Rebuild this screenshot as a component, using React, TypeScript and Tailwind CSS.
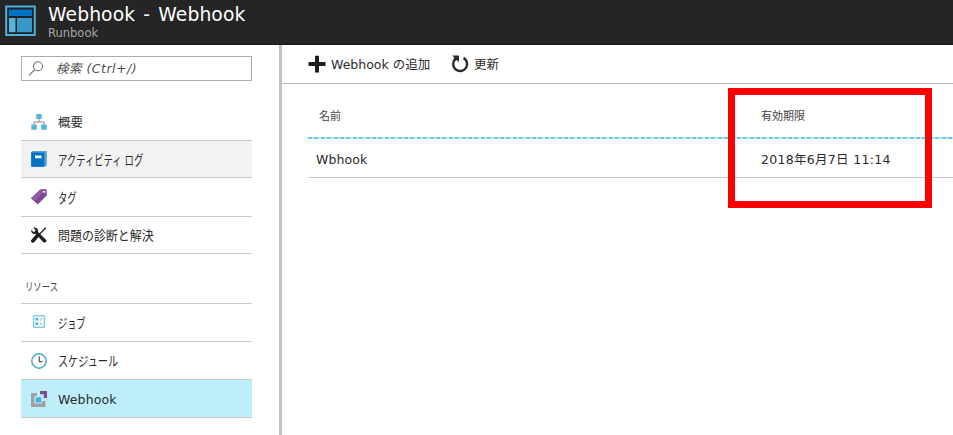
import type { ReactNode } from "react";

function RunbookLogo() {
  return (
    <svg width="32" height="34" viewBox="0 0 32 34" className="shrink-0">
      <rect x="1.200" y="3.500" width="28.600" height="28.500" fill="#1c2429" stroke="#4fb1d8" strokeWidth="2" />
      <rect x="4" y="6.500" width="23" height="6.500" fill="#0072c6" />
      <rect x="4" y="15" width="6.500" height="14.200" fill="#59b4d9" />
      <rect x="12" y="15" width="15" height="14.200" fill="#3999c6" />
    </svg>
  );
}

function SearchIcon() {
  return (
    <svg width="16" height="16" viewBox="0 0 16 16" fill="none" stroke="#707070" strokeWidth="1.100">
      <circle cx="10" cy="5.200" r="4.500" />
      <path d="M6.800 8.500 1 14.300" />
    </svg>
  );
}

function OverviewIcon() {
  return (
    <svg width="16" height="16" viewBox="0 0 16 16">
      <path d="M8 4v4M3 11V8h10v3" fill="none" stroke="#8a8a8a" />
      <path d="M5.200 0h5.500v5H5.200zM.3 10.500h5.500v5.300H.3zM10.200 10.500h5.500v5.300h-5.500z" fill="#59b4d9" />
    </svg>
  );
}

function LogIcon() {
  return (
    <svg width="16" height="16" viewBox="0 0 16 16">
      <path d="M1.800 0H15.800v14l-1.300 1.500H0V1.500z" fill="#5b9fd3" />
      <path d="M.3 1.500H13.300v14.300H.3z" fill="#0072c6" />
      <rect x="4" y="4.500" width="6.500" height="2.700" fill="#fff" />
    </svg>
  );
}

function TagIcon() {
  return (
    <svg width="16" height="16" viewBox="0 0 16 16">
      <path d="M0 9.200 9.300.5 14.500 0l1.200 1v5.500L6.800 15.600z" fill="#804998" />
      <path d="M0 9.200 9.300.5 14.500 0 3.700 12.600z" fill="#925cab" />
      <circle cx="13.200" cy="2.800" r="1.100" fill="#fff" />
    </svg>
  );
}

function ToolsIcon() {
  return (
    <svg width="16" height="16" viewBox="0 0 16 16">
      <path d="M14.900.7 8.700 7" stroke="#1e1e1e" strokeWidth="1.300" />
      <path d="M7.400 7.500 1.800 14" stroke="#1e1e1e" strokeWidth="3.500" strokeLinecap="round" />
      <path
        d="M2.200.6 4.600 3 4 4.500 2.500 5 .2 2.800C-.2 5.200 1.800 7.500 4.700 6.800l7.400 8.200c1 1.100 3.900.5 3.400-1.300-.1-.5-.5-.8-.8-1.100L7 5C7.700 2 5.300-.3 2.200.6Z"
        fill="#1e1e1e"
      />
    </svg>
  );
}

function JobsIcon() {
  return (
    <svg width="16" height="16" viewBox="0 0 16 16">
      <rect x="2.500" y=".7" width="11" height="11.600" rx="1" fill="#edf8fc" stroke="#7bc8e5" strokeWidth="1.300" />
      <path d="M4.500 3h2.500v2.500H4.500zM4.500 7.500H7V10H4.500z" fill="#4daed5" />
      <path d="m8.800 4.300 1 1 2-2.500M9 7.500l2 2.400M9 9.800l1-1" fill="none" stroke="#9eafb8" strokeWidth=".8" />
    </svg>
  );
}

function ClockIcon() {
  return (
    <svg width="16" height="16" viewBox="0 0 16 16" fill="none">
      <circle cx="8" cy="8" r="7.200" fill="#fff" stroke="#4ba5cd" strokeWidth="1.500" />
      <path d="M8.300 3.500v5.200h3.200" stroke="#555" strokeWidth="1.200" />
    </svg>
  );
}

function WebhookIcon() {
  return (
    <svg width="16" height="16" viewBox="0 0 16 16">
      <path d="M0 2h6v3H3.500v7.500h7.500V10h3.500v6H0z" fill="#a0a1a2" />
      <rect x="4.700" y="6.300" width="5.500" height="5.200" fill="#48b0da" />
      <path d="M9 0h7v7h-3.300V3.300H9z" fill="#804998" />
    </svg>
  );
}

function PlusIcon() {
  return (
    <svg width="18" height="18" viewBox="0 0 18 18" className="shrink-0">
      <path d="M7 .7h4v6.400h6.500v4H11v6.400H7v-6.400H.5v-4H7z" fill="#1e1e1e" />
    </svg>
  );
}

function RefreshIcon() {
  return (
    <svg width="18" height="18" viewBox="0 0 18 18" className="block shrink-0">
      <path d="M4 4.300A7 7 0 1 0 12.500 2.900" fill="none" stroke="#2b2b2b" strokeWidth="2.400" />
      <path d="M1.300.6h6.700v6.700L5.800 5 3.800 6 2.300 4.500 3.300 2.800z" fill="#2b2b2b" />
    </svg>
  );
}

type NavItem = { icon: ReactNode; label: string; row: string; text: string };

const general: NavItem[] = [
  { icon: <OverviewIcon />, label: "概要", row: "h-[38px]", text: "pt-[3px] text-[12.5px]" },
  { icon: <LogIcon />, label: "アクティビティ ログ", row: "h-[37px] bg-[#f2f2f2]", text: "pt-[2px] text-[13.5px] origin-left scale-x-[0.69]" },
  { icon: <TagIcon />, label: "タグ", row: "h-[39px]", text: "pt-[2px] text-[13.5px] origin-left scale-x-[0.69]" },
  { icon: <ToolsIcon />, label: "問題の診断と解決", row: "h-[37px]", text: "pt-[2px] text-[13px] origin-left scale-x-[0.92]" },
];

const resources: NavItem[] = [
  { icon: <JobsIcon />, label: "ジョブ", row: "h-[38px]", text: "pt-[2px] text-[13.5px] origin-left scale-x-[0.68]" },
  { icon: <ClockIcon />, label: "スケジュール", row: "h-[38px]", text: "pt-[2px] text-[13.5px] origin-left scale-x-[0.75]" },
  { icon: <WebhookIcon />, label: "Webhook", row: "h-[38px] bg-[#bdeefa]", text: "pt-[4px] text-[12.5px] tracking-[0.15px]" },
];

function Nav({ items }: { items: NavItem[] }) {
  return (
    <ul>
      {items.map((item) => (
        <li key={item.label} className={`flex items-center border-b border-[#c8c8c8] pl-[10px] ${item.row}`}>
          <span className="mr-[11px] shrink-0">{item.icon}</span>
          <span className={`whitespace-nowrap ${item.text}`}>{item.label}</span>
        </li>
      ))}
    </ul>
  );
}

export default function App() {
  return (
    <div className="relative flex h-[435px] w-[953px] flex-col overflow-hidden bg-white font-['DejaVu_Sans','Noto_Sans_CJK_JP',sans-serif] text-[#2b2b2b]">
      <header className="flex h-[45px] shrink-0 border-b border-[#181818] bg-[#252525] pl-[5px] pt-[3px]">
        <RunbookLogo />
        <div className="ml-[11px]">
          <h1 className="h-[24px] origin-left scale-x-[0.937] whitespace-nowrap text-[20px] leading-[23px] tracking-[0.1px] text-white [word-spacing:2.2px]">Webhook - Webhook</h1>
          <p className="text-[11.500px] leading-[13px] text-[#a5a5a5]">Runbook</p>
        </div>
      </header>
      <div className="flex min-h-0 flex-1">
        <aside className="w-[282px] shrink-0 border-r-[3px] border-[#c1c1c1] pl-[21px] pr-[27px] pt-[11px]">
          <div className="mb-[22px] flex h-[25px] items-center border border-[#ababab] pl-[6px]">
            <SearchIcon />
            <span className="ml-[12px] whitespace-nowrap pt-px text-[12.5px] italic tracking-[0.5px] text-[#505050]">検索 (Ctrl+/)</span>
          </div>
          <Nav items={general} />
          <h2 className="flex h-[50px] items-end border-b border-[#c8c8c8] pb-[7px] pl-[4px] text-[11px] text-[#444]">
            <span className="origin-left scale-x-[0.76]">リソース</span>
          </h2>
          <Nav items={resources} />
        </aside>
        <main className="min-w-0 flex-1">
          <div className="flex h-[39px] items-center border-b border-[#b8b8b8] pl-[26px]">
            <PlusIcon />
            <span className="ml-[5px] w-[101px] whitespace-nowrap pt-[3px] text-[12.5px]">Webhook の追加</span>
            <span className="ml-[19px]"><RefreshIcon /></span>
            <span className="ml-[5px] pt-[3px] text-[12.5px]">更新</span>
          </div>
          <div className="ml-[26px]">
            <div className="flex h-[53px] items-center pt-[13px] text-[11px] text-[#444]">
              <span className="w-[453px] pl-[11px]">名前</span>
              <span>有効期限</span>
            </div>
            <div className="h-[2px] bg-[repeating-linear-gradient(90deg,#5bcdf0_0_4px,#d8e2e6_4px_6.4px)]" />
            <div className="flex h-[39px] items-center border-b border-[#c8c8c8] pt-[4px] text-[12.5px]">
              <span className="w-[453px] pl-[8px] tracking-[0.1px]">Wbhook</span>
              <span className="tracking-[0.3px]">2018年6月7日 11:14</span>
            </div>
          </div>
        </main>
      </div>
      <div className="absolute left-[728px] top-[88px] h-[120px] w-[204px] border-[7px] border-[#fe0000]" />
    </div>
  );
}
